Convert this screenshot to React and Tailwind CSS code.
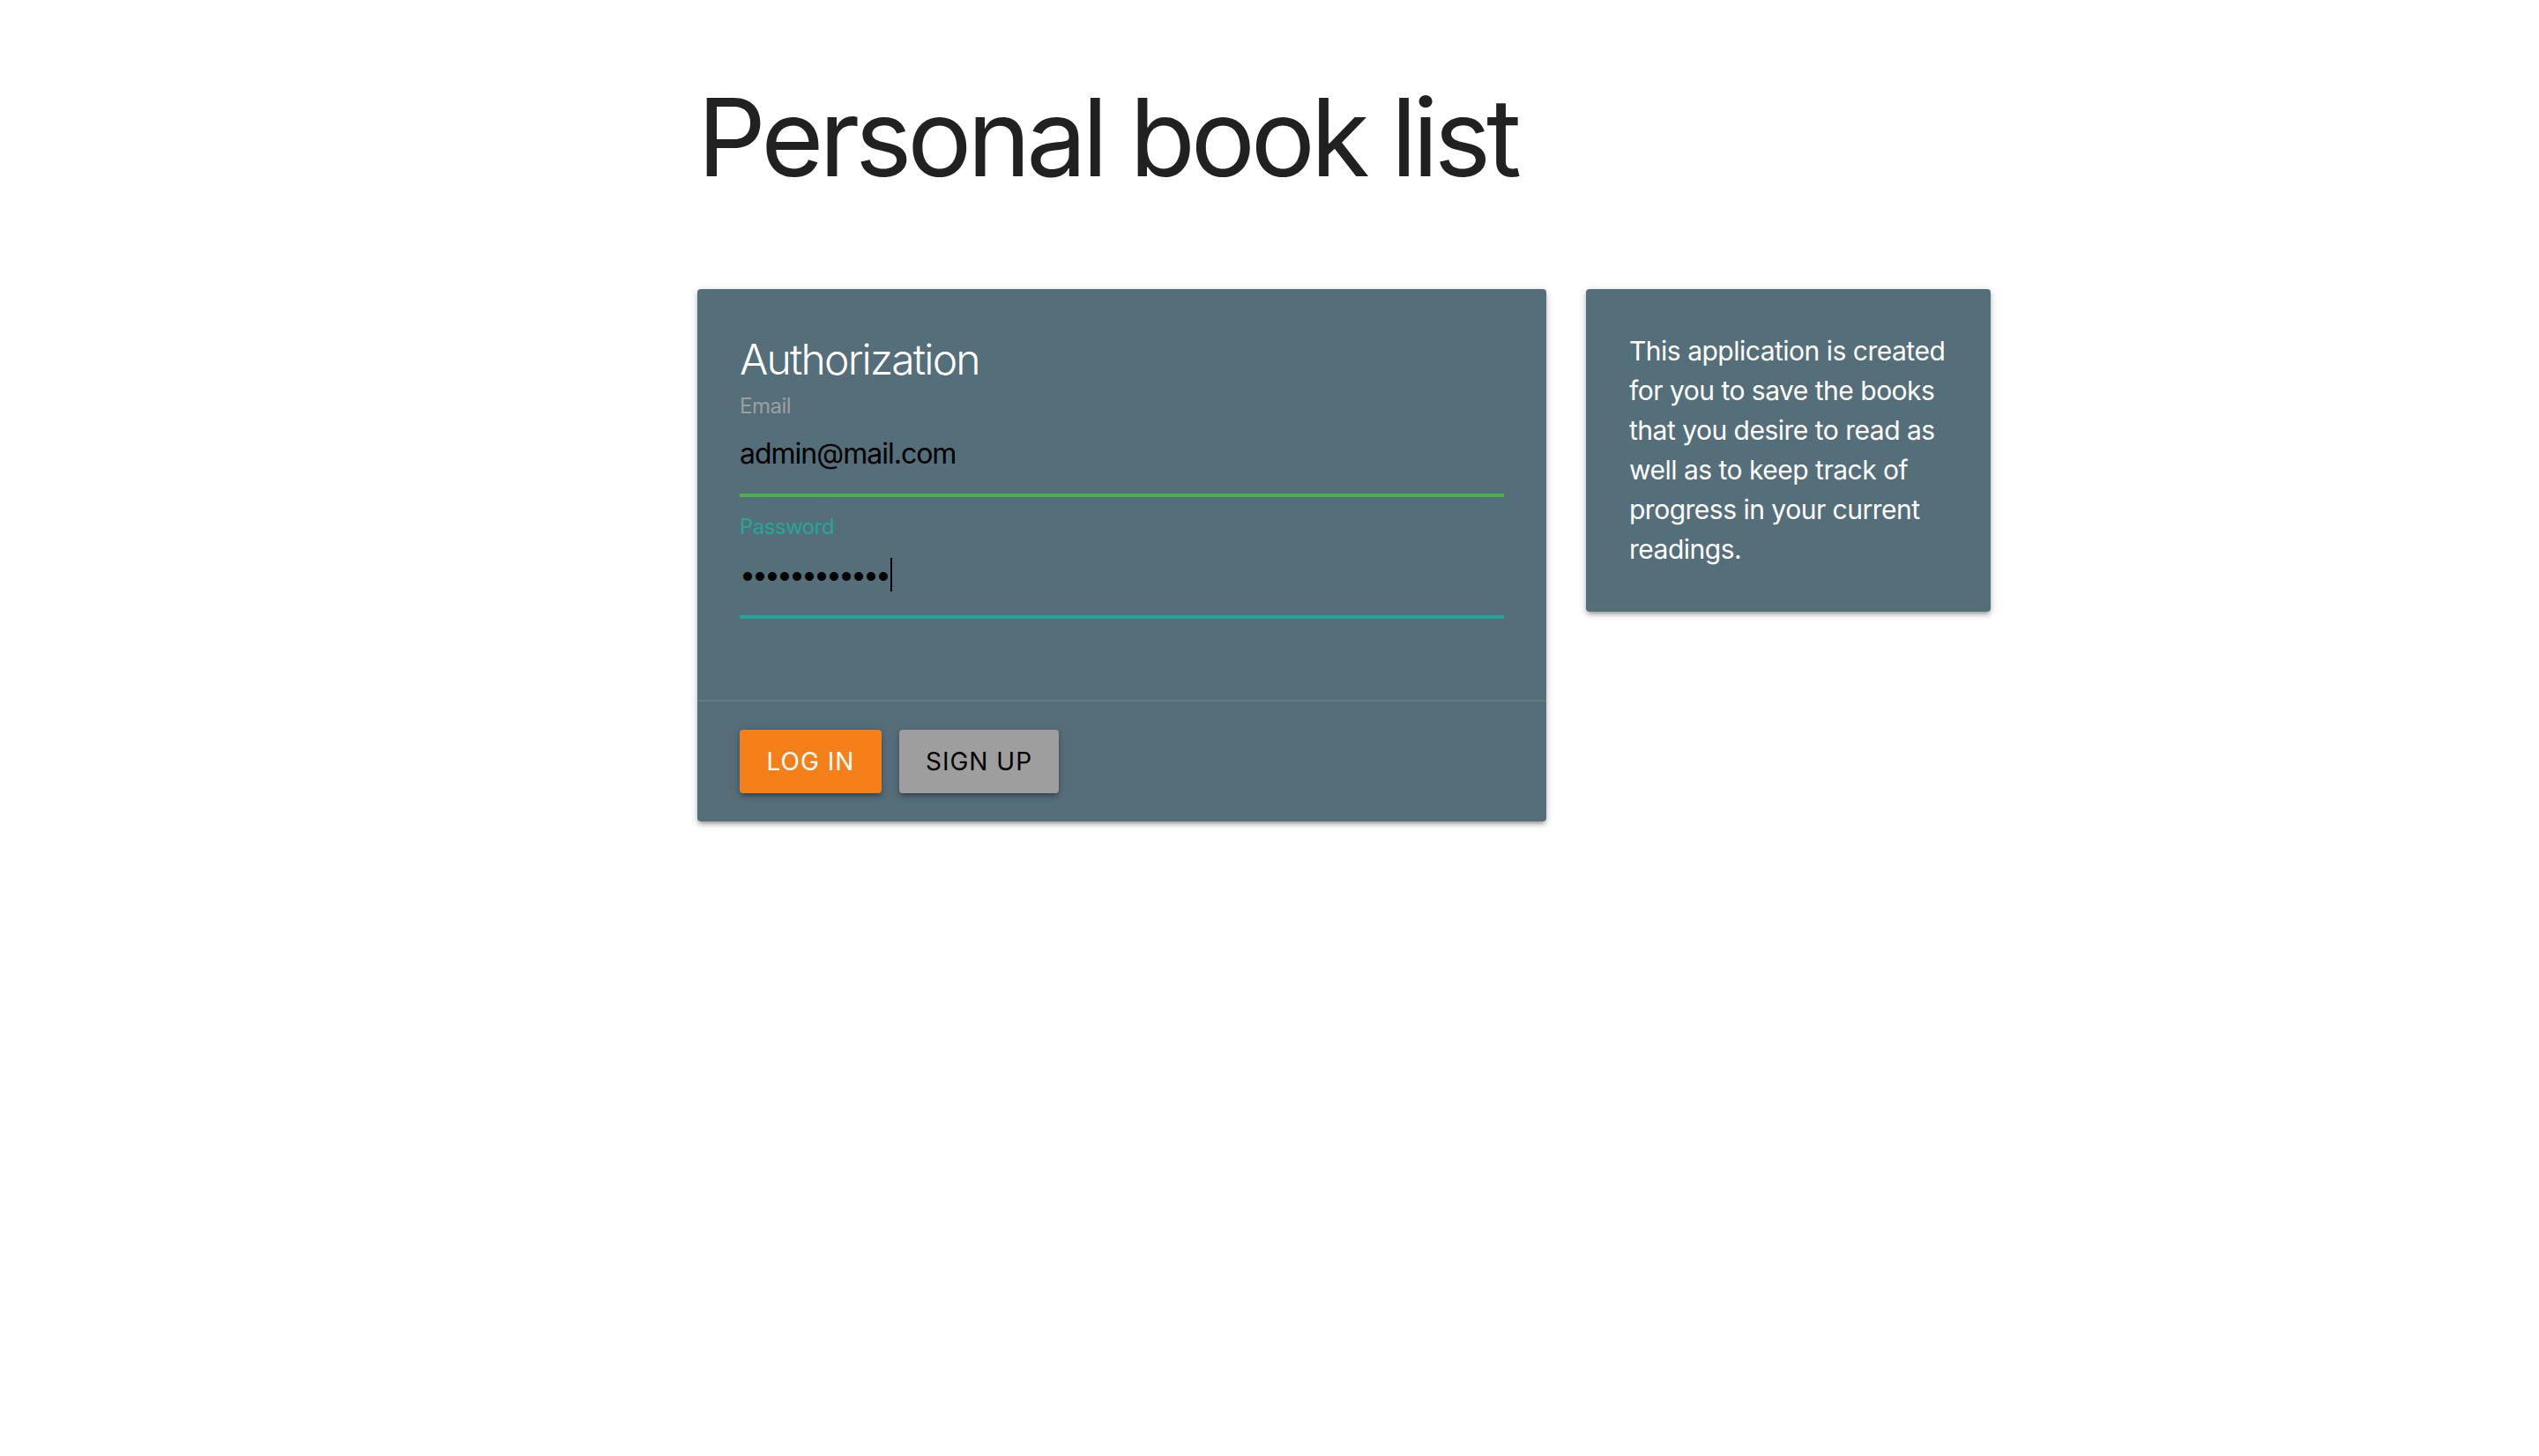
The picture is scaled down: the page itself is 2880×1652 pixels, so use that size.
const cardShadow =
  'shadow-[0_4px_4px_0_rgba(0,0,0,0.14),0_6px_2px_-4px_rgba(0,0,0,0.12),0_2px_10px_0_rgba(0,0,0,0.2)]';

const infoLines = [
  'This application is created',
  'for you to save the books',
  'that you desire to read as',
  'well as to keep track of',
  'progress in your current',
  'readings.',
];

function AuthCard() {
  return (
    <div className={`w-[963px] rounded-[4px] bg-[#546e7a] ${cardShadow}`}>
      <div className="px-[48px] pt-[48px] pb-[92px]">
        <h2 className="text-[48px] leading-[64px] font-light tracking-[-1.8px] text-white">Authorization</h2>

        <div className="mt-[9px] text-[24px] leading-[24px] tracking-[-0.5px] text-[#9e9e9e]">Email</div>
        <div className="flex h-[91px] items-center border-b-4 border-[#4caf50] pb-[4px] text-[32px] tracking-[-1px] text-black">
          admin@mail.com
        </div>

        <div className="mt-[22px] text-[24px] leading-[24px] tracking-[-0.5px] text-[#26a69a]">Password</div>
        <div className="flex h-[92px] items-center border-b-4 border-[#26a69a] pb-[4px] text-[32px] text-black">
          <span className="tracking-[-4px]">••••••••••••</span>
          <span className="ml-[3px] h-[38px] w-[2px] bg-black" />
        </div>
      </div>

      <div className="flex gap-[20px] border-t-2 border-[rgba(160,160,160,0.2)] px-[48px] py-[32px]">
        <button
          type="button"
          className={`flex h-[72px] w-[161px] items-center justify-center rounded-[4px] bg-[#f5801a] text-[28px] tracking-[1px] text-white uppercase ${cardShadow}`}
        >
          Log in
        </button>
        <button
          type="button"
          className={`flex h-[72px] w-[181px] items-center justify-center rounded-[4px] bg-[#9e9e9e] text-[28px] tracking-[1px] text-black uppercase ${cardShadow}`}
        >
          Sign up
        </button>
      </div>
    </div>
  );
}

function InfoCard() {
  return (
    <div className={`w-[459px] rounded-[4px] bg-[#546e7a] px-[49px] py-[48px] ${cardShadow}`}>
      <p className="text-[30px] leading-[45px] tracking-[-0.5px] whitespace-nowrap text-white">
        {infoLines.map((line, i) => (
          <span key={i} className="block">{line}</span>
        ))}
      </p>
    </div>
  );
}

export default function App() {
  return (
    <div className="min-h-screen bg-white font-['Inter',sans-serif]">
      <div className="pl-[791px] pt-[95px]">
        <h1 className="text-[122px] leading-none font-normal tracking-[-0.042em] text-[#212121]">
          Personal book list
        </h1>
        <div className="mt-[111px] flex items-start gap-[45px]">
          <AuthCard />
          <InfoCard />
        </div>
      </div>
    </div>
  );
}
